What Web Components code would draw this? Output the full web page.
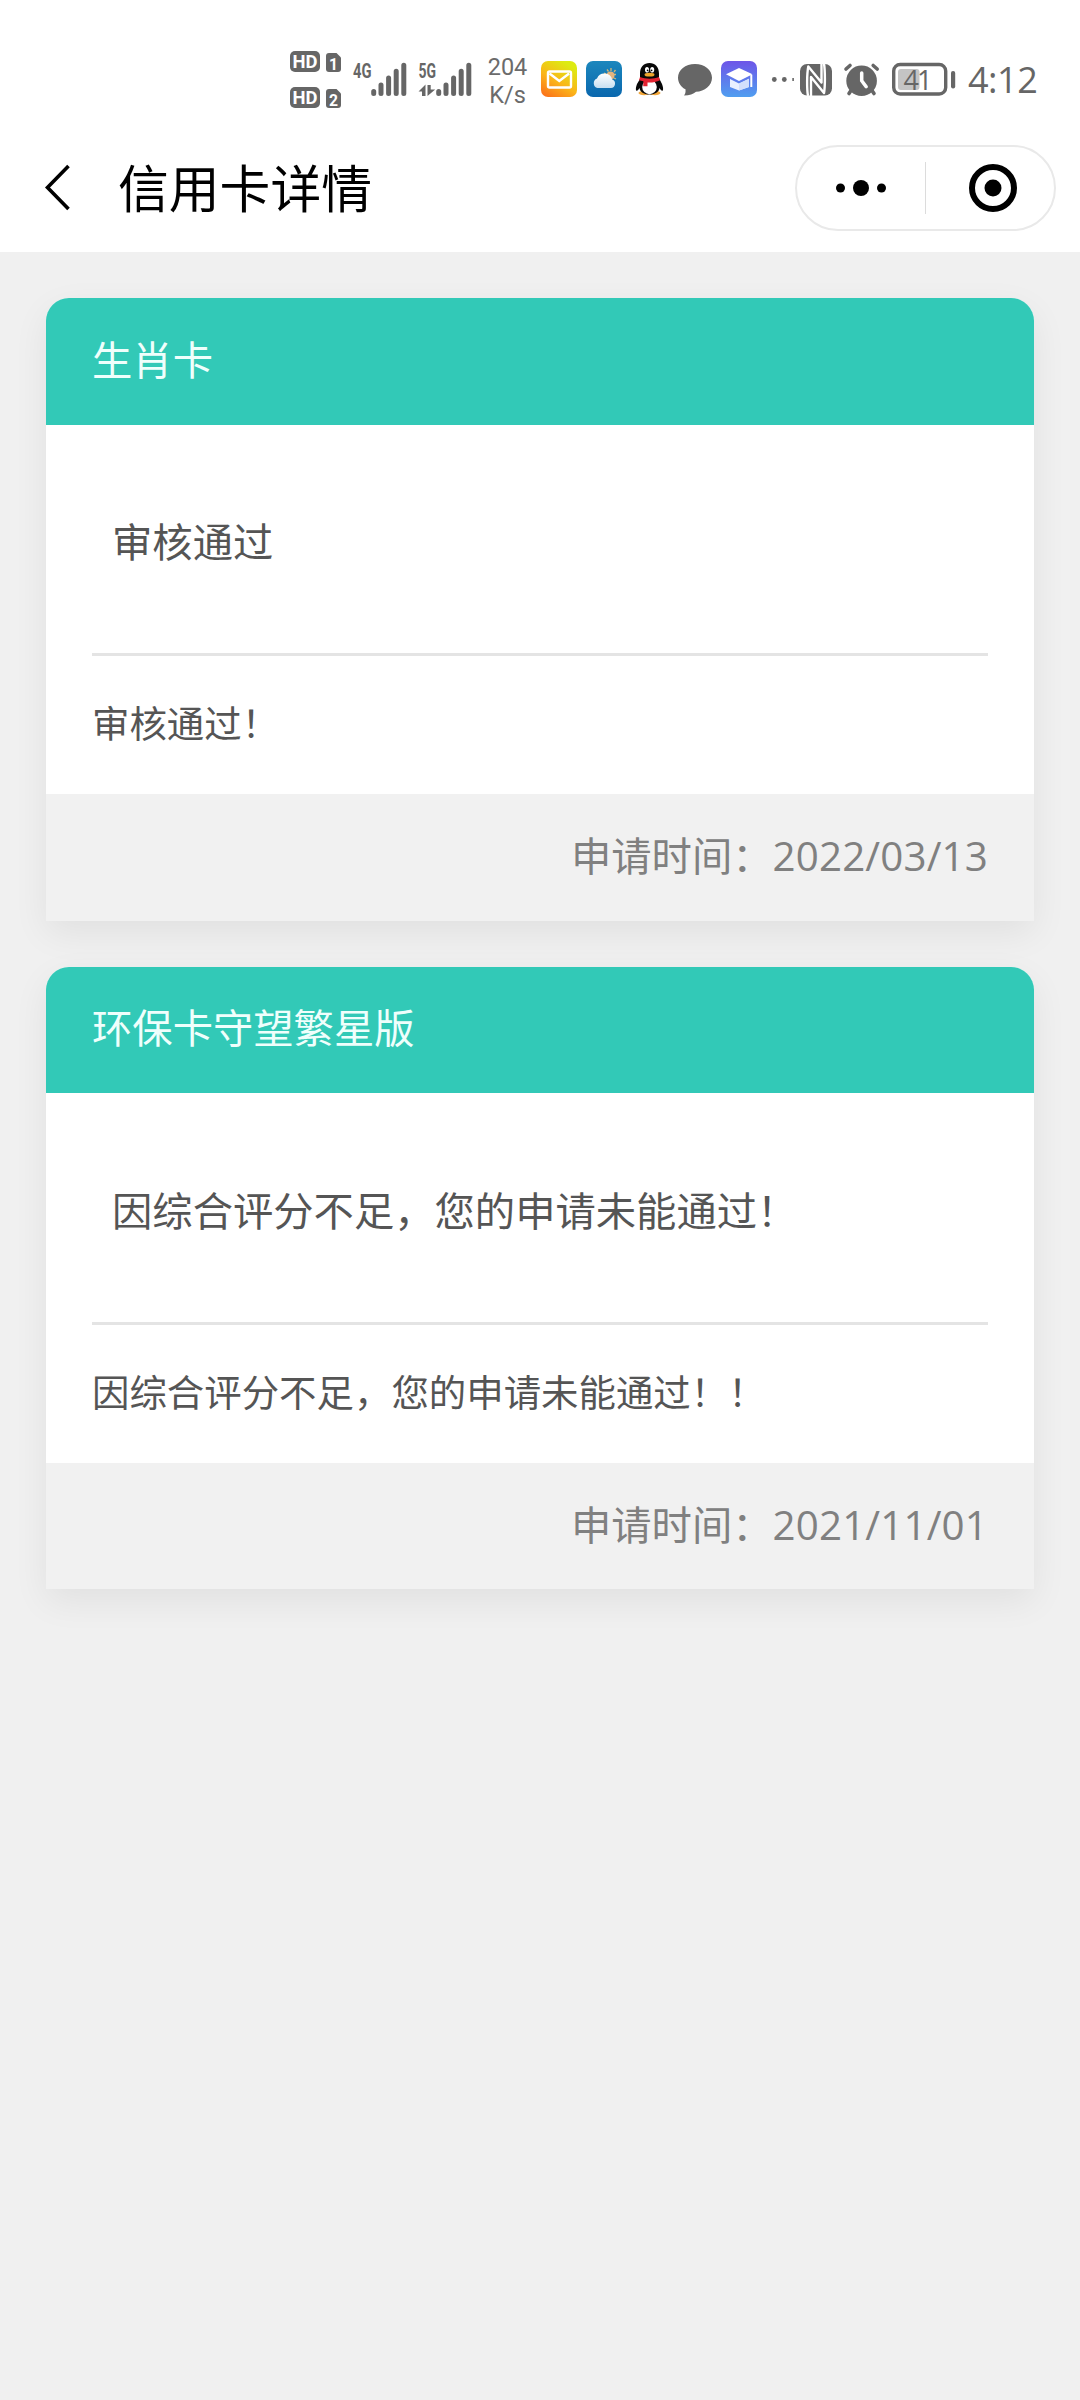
<!DOCTYPE html>
<html lang="zh-CN">
<head>
<meta charset="utf-8">
<title>信用卡详情</title>
<style>
html{background:#f0f0f0}
body{margin:0;font-family:"Noto Sans CJK SC",sans-serif;background:#f0f0f0}
</style>
</head>
<body>
<credit-page>
  <status-bar></status-bar>
  <nav-bar>信用卡详情</nav-bar>
  <card-list>
    <apply-card>
      <span slot="name">生肖卡</span>
      <span slot="status">审核通过</span>
      <span slot="detail">审核通过！</span>
      <span slot="date">2022/03/13</span>
    </apply-card>
    <apply-card>
      <span slot="name">环保卡守望繁星版</span>
      <span slot="status">因综合评分不足，您的申请未能通过！</span>
      <span slot="detail">因综合评分不足，您的申请未能通过！！</span>
      <span slot="date">2021/11/01</span>
    </apply-card>
  </card-list>
</credit-page>
<script>
const define = (name, html) => customElements.define(name, class extends HTMLElement {
  constructor() {
    super();
    this.attachShadow({ mode: 'open' }).innerHTML = html;
  }
});

define('credit-page', `
<style>:host{display:flex;flex-direction:column;width:1080px;min-height:2400px;background:#f0f0f0}</style>
<slot></slot>`);

define('icon-hd', `
<style>:host{display:block;width:60px;height:80px}svg{display:block}text{font:bold 18.5px Roboto,sans-serif;fill:#fff}</style>
<svg width="60" height="80" viewBox="285 40 60 80">
<g fill="#666"><rect x="290" y="51" width="30" height="21" rx="5"/><path d="M329 53h7.500l4.500 4.500V69a3 3 0 0 1-3 3h-9a3 3 0 0 1-3-3V56a3 3 0 0 1 3-3z"/>
<rect x="290" y="87" width="30" height="21" rx="5"/><path d="M329 89h7.500l4.500 4.500V105a3 3 0 0 1-3 3h-9a3 3 0 0 1-3-3V92a3 3 0 0 1 3-3z"/></g>
<text x="292.500" y="68.200" textLength="25" lengthAdjust="spacingAndGlyphs">HD</text><text x="329" y="69.500" style="font-size:17px" textLength="9" lengthAdjust="spacingAndGlyphs">1</text>
<text x="292.500" y="104.200" textLength="25" lengthAdjust="spacingAndGlyphs">HD</text><text x="329" y="105.500" style="font-size:17px" textLength="9" lengthAdjust="spacingAndGlyphs">2</text>
</svg>`);

define('icon-signal', `
<style>:host{display:block;width:140px;height:80px}svg{display:block}text{font:bold 20px Roboto,sans-serif;fill:#666}</style>
<svg width="140" height="80" viewBox="345 40 140 80">
<text x="353" y="77.500" textLength="18.500" lengthAdjust="spacingAndGlyphs">4G</text><text x="418.500" y="77.500" textLength="17.500" lengthAdjust="spacingAndGlyphs">5G</text>
<g stroke="#666" stroke-width="5" stroke-linecap="round">
<path d="M373.700 91.500v2M381 85v8.500M388.600 78v15.500M396.200 71.300v22.200M403.800 65.300v28.200"/>
<path d="M438.700 91.500v2M446 85v8.500M453.600 78v15.500M461.200 71.300v22.200M468.800 65.300v28.200"/></g>
<path d="M418.500 91.500l7-7V96h-3.500v-4.500zM427.500 85h3.200v4.500h4.500L427.500 96z" fill="#666"/>
</svg>`);

define('net-speed', `
<style>:host{display:flex;flex-direction:column;width:45px;height:80px;box-sizing:border-box;padding-top:13px;align-items:center;font:23.500px/28px Roboto,sans-serif;color:#6b6b6b}span{display:block}</style>
<span>204</span><span>K/s</span>`);

define('icon-mail', `
<style>:host{display:block;width:50px;height:80px}svg{display:block}</style>
<svg width="50" height="80" viewBox="530 40 50 80"><defs><linearGradient id="a" x1="0" y1="1" x2=".6" y2="0"><stop stop-color="#fb681b"/><stop offset=".5" stop-color="#fbb419"/><stop offset="1" stop-color="#ddeb12"/></linearGradient></defs>
<rect x="541" y="61" width="36" height="36" rx="7" fill="url(#a)"/><rect x="548" y="71.500" width="23" height="16" rx="1.500" fill="none" stroke="#fff" stroke-width="2.400"/><path d="M549.500 73.500l9.800 7.500 9.800-7.500" fill="none" stroke="#fff" stroke-width="2.400"/></svg>`);

define('icon-weather', `
<style>:host{display:block;width:48px;height:80px}svg{display:block}</style>
<svg width="48" height="80" viewBox="580 40 48 80"><defs><linearGradient id="a" x2="0" y2="1"><stop stop-color="#1c87bd"/><stop offset="1" stop-color="#0967ae"/></linearGradient><linearGradient id="b" x2="0" y2="1"><stop stop-color="#fff"/><stop offset="1" stop-color="#c7dff1"/></linearGradient></defs>
<rect x="586" y="61" width="36" height="36" rx="7" fill="url(#a)"/><path d="M604 73l2 1M607 69.500l1.500 2M611 68v3M615.500 70l-1.500 2M616 74.500h-2M616 79l-2-1" stroke="#d3b778" stroke-width="1.300"/><circle cx="610.500" cy="75.500" r="4" fill="#e3b47f"/><path d="M597.500 88a5 5 0 0 1-.5-9.500 8 8 0 0 1 15.200 1A4.400 4.400 0 0 1 611 88z" fill="url(#b)"/></svg>`);

define('icon-penguin', `
<style>:host{display:block;width:44px;height:80px}svg{display:block}</style>
<svg width="44" height="80" viewBox="628 40 44 80"><ellipse cx="644" cy="93" rx="5.500" ry="2.200" fill="#f2a73a"/><ellipse cx="655" cy="93" rx="5.500" ry="2.200" fill="#f2a73a"/>
<path d="M640 79V73.500C640 67 644 63 649.500 63S659 67 659 73.500V78l3 6c1.200 3 1.400 5.500.8 6.500-.9.800-2.300-.8-3.300-2.500C659 92 655 94.500 649.500 94.500S640 92 639.500 88c-1 1.700-2.400 3.300-3.300 2.500-.6-1-.4-3.500.8-6.500z" fill="#080808"/>
<ellipse cx="649.500" cy="87" rx="7.300" ry="7.200" fill="#fff"/><ellipse cx="647" cy="69.800" rx="2" ry="2.800" fill="#fff"/><ellipse cx="652.200" cy="69.800" rx="2" ry="2.800" fill="#fff"/><circle cx="647.600" cy="70.300" r=".9"/><circle cx="651.600" cy="70.300" r=".9"/>
<ellipse cx="649.500" cy="74.700" rx="5" ry="1.900" fill="#efa72c"/><path d="M640 77c5.500 2.200 13.500 2.200 19 0l1 3.200c-4 2-9 2.600-12.500 2.200v3.800h-4.300l.2-5-4.400-1z" fill="#e32230"/></svg>`);

define('icon-bubble', `
<style>:host{display:block;width:43px;height:80px}svg{display:block}</style>
<svg width="43" height="80" viewBox="672 40 43 80"><path d="M695 64c9.700 0 17 6 17 13.700S704.700 91.500 696 91.800c-2.500 2.300-6.500 3.800-12 3.800 1.300-1.500 1.800-3.500 1.500-6.300C681 87 678 82.500 678 77.700 678 70 685.300 64 695 64z" fill="#666"/></svg>`);

define('icon-study', `
<style>:host{display:block;width:50px;height:80px}svg{display:block}</style>
<svg width="50" height="80" viewBox="715 40 50 80"><defs><linearGradient id="a" x2="0" y2="1"><stop stop-color="#6d55e8"/><stop offset="1" stop-color="#509ef0"/></linearGradient></defs>
<rect x="721" y="61" width="36" height="36" rx="7" fill="url(#a)"/><path d="M739 68l13.500 6.300L739 81l-13-6.700z" fill="#fff"/><path d="M730 79l9 4.500 10-4.800V87l-10 3.500-9-3.500z" fill="#e9f1ff"/><path d="M739 83.500l10-4.800V87l-10 3.500z" fill="#d2e0fc"/><path d="M751.300 75v12" stroke="#fff" stroke-width="2"/></svg>`);

define('icon-system', `
<style>:host{display:block;width:120px;height:80px}svg{display:block}</style>
<svg width="120" height="80" viewBox="765 40 120 80"><g fill="#666"><circle cx="774.300" cy="79.500" r="2.400"/><circle cx="784.300" cy="79.500" r="2.400"/><rect x="792.300" y="78" width="1.600" height="3"/>
<rect x="800" y="64" width="32" height="31.500" rx="7"/></g>
<path d="M808 96C806.800 89 806.800 74 808.300 66.500L821.500 82.500V63.500" fill="none" stroke="#fff" stroke-width="2.400" stroke-linejoin="round"/>
<path d="M811 96V77L824 93C825.200 87 825.200 71 824 63.500" fill="none" stroke="#fff" stroke-width="2.400" stroke-linejoin="round"/>
<g stroke="#666" fill="none" stroke-width="3.600" stroke-linecap="round"><path d="M846 69l4-3.500M873.200 65.500l4 3.500M852 89l-3 4.500M871 89l3 4.500"/></g><circle cx="861.600" cy="80.700" r="15.300" fill="#666"/><path d="M861.700 73v7.700l4.500 6" stroke="#fff" stroke-width="3.500" fill="none" stroke-linecap="round"/></svg>`);

define('icon-battery', `
<style>:host{display:block;width:75px;height:80px}svg{display:block}text{font:27px "Open Sans",sans-serif;fill:#666}</style>
<svg width="75" height="80" viewBox="885 40 75 80"><rect x="893.700" y="64.500" width="52" height="29.500" rx="6.500" fill="none" stroke="#666" stroke-width="3.400"/><rect x="898" y="69" width="21.500" height="21" rx="3" fill="#c4c4c4"/><rect x="951" y="71" width="4.200" height="17.500" rx="2" fill="#666"/><text x="903.500" y="89.500" textLength="29" lengthAdjust="spacing">41</text></svg>`);

define('status-bar', `
<style>:host{display:flex;height:120px;box-sizing:border-box;padding:40px 0 0 285px;background:#fff}
time{font:36px/80px "Open Sans",sans-serif;color:#666;padding-left:8px;letter-spacing:-.5px}</style>
<icon-hd></icon-hd><icon-signal></icon-signal><net-speed></net-speed><icon-mail></icon-mail><icon-weather></icon-weather><icon-penguin></icon-penguin><icon-bubble></icon-bubble><icon-study></icon-study><icon-system></icon-system><icon-battery></icon-battery><time>4:12</time>`);

define('capsule-menu', `
<style>:host{display:flex;align-items:center;box-sizing:border-box;width:261px;height:86px;margin-top:-1px;border:2px solid #e9e9e9;border-radius:43px;background:#fff}
.cell{flex:1;display:flex;justify-content:center}.line{width:1px;height:52px;background:#dcdcdc}svg{display:block}</style>
<div class="cell"><svg width="52" height="50"><circle cx="5.500" cy="25" r="4.500"/><circle cx="26" cy="25" r="8"/><circle cx="46.500" cy="25" r="4.500"/></svg></div>
<div class="line"></div>
<div class="cell"><svg width="56" height="50"><circle cx="31" cy="25" r="21" fill="none" stroke="#000" stroke-width="6"/><circle cx="31" cy="25" r="8.500"/></svg></div>`);

define('nav-bar', `
<style>:host{display:flex;align-items:center;height:132px;box-sizing:border-box;padding:4px 24px 0 44px;background:#fff;color:#000}
svg{display:block}h1{flex:1;margin:-4px 0 0 46px;font-size:50.800px;font-weight:400;line-height:80px}</style>
<svg width="28" height="48" viewBox="0 0 28 48" fill="none" stroke="#000" stroke-width="3.600"><path d="M24.500 2L3.500 23.500l21 21.500"/></svg><h1><slot></slot></h1><capsule-menu></capsule-menu>`);

define('card-list', `
<style>:host{display:flex;flex-direction:column;gap:46px;padding:46px}</style><slot></slot>`);

define('apply-card', `
<style>:host{display:flex;flex-direction:column;border-radius:23px 23px 0 0;background:#fff;box-shadow:0 12px 36px rgba(0,0,0,.065);font-size:40.320px;line-height:60px;color:#555}
header{height:126.500px;box-sizing:border-box;padding:29.500px 46px 0;border-radius:23px 23px 0 0;background:#32c9b7;color:#effffc}
.body{padding:0 46px;height:369.500px;box-sizing:border-box}
.status{height:231.500px;box-sizing:border-box;border-bottom:3px solid #e4e4e4;padding:85.500px 20px 0}
.detail{font-size:37.440px;padding-top:36px}
footer{height:126.500px;box-sizing:border-box;background:#f1f1f1;color:#808080;display:flex;align-items:baseline;justify-content:flex-end;padding:30px 46px 0}
.date{font-family:"Open Sans",sans-serif;letter-spacing:.15px}</style>
<header><slot name="name"></slot></header>
<div class="body"><div class="status"><slot name="status"></slot></div><div class="detail"><slot name="detail"></slot></div></div>
<footer><span>申请时间：</span><span class="date"><slot name="date"></slot></span></footer>`);
</script>
</body>
</html>
